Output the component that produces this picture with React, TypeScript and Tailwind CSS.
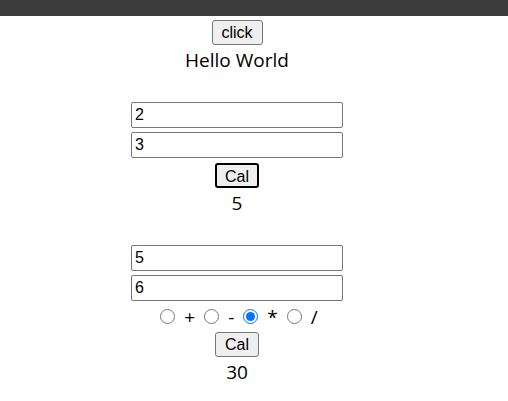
import { useState } from "react";

const sans = "font-['Open_Sans',sans-serif]";
const arial = "font-['Liberation_Sans',Arial,sans-serif]";

function Field({ value, onChange }: { value: string; onChange: (v: string) => void }) {
  return (
    <input
      type="text"
      value={value}
      onChange={(e) => onChange(e.target.value)}
      className={`${arial} w-[212px] h-[26px] px-[3px] text-[16px] text-black border border-[#767676] rounded-[2px] bg-white outline-none`}
    />
  );
}

function CalButton({ focused, onClick }: { focused?: boolean; onClick: () => void }) {
  return (
    <button
      onClick={onClick}
      className={`${arial} w-[44px] h-[25px] text-[16px] text-black bg-[#efefef] rounded-[3px] ${
        focused ? "border-2 border-black" : "border border-[#767676]"
      }`}
    >
      Cal
    </button>
  );
}

const ops = ["+", "-", "*", "/"];

export default function App() {
  const [msg, setMsg] = useState("Hello World");
  const [a, setA] = useState("2");
  const [b, setB] = useState("3");
  const [sum, setSum] = useState("5");
  const [c, setC] = useState("5");
  const [d, setD] = useState("6");
  const [op, setOp] = useState("*");
  const [res, setRes] = useState("30");

  const calc = () => {
    const x = Number(c);
    const y = Number(d);
    if (op === "+") setRes(String(x + y));
    if (op === "-") setRes(String(x - y));
    if (op === "*") setRes(String(x * y));
    if (op === "/") setRes(String(x / y));
  };

  return (
    <div className="w-[508px] h-[401px] bg-white overflow-hidden">
      <div className="h-[16px] bg-[#3c3c3c]" />

      <div className="w-[474px] flex flex-col items-center">
        {/* click */}
        <button
          onClick={() => setMsg(msg === "Hello World" ? "Hi" : "Hello World")}
          className={`${arial} mt-[4px] w-[51px] h-[25px] text-[16px] text-black bg-[#efefef] border border-[#767676] rounded-[3px]`}
        >
          click
        </button>
        <div className={`${sans} h-[30px] leading-[30px] text-[19px] text-black`}>{msg}</div>

        {/* sum */}
        <div className="mt-[27px] flex flex-col items-center gap-[4px]">
          <Field value={a} onChange={setA} />
          <Field value={b} onChange={setB} />
        </div>
        <div className="mt-[5px]">
          <CalButton focused onClick={() => setSum(String(Number(a) + Number(b)))} />
        </div>
        <div className={`${sans} h-[30px] leading-[30px] text-[19px] text-black`}>{sum}</div>

        {/* operator calc */}
        <div className="mt-[27px] flex flex-col items-center gap-[4px]">
          <Field value={c} onChange={setC} />
          <Field value={d} onChange={setD} />
        </div>
        <div className={`${sans} h-[31px] pl-[4px] flex items-center gap-[9px] text-[19px] text-black`}>
          {ops.map((o) => (
            <label key={o} className="flex items-center gap-[9px]">
              <input
                type="radio"
                name="op"
                checked={op === o}
                onChange={() => setOp(o)}
                className="w-[15px] h-[15px] -mt-[1px] accent-[#0075ff]"
              />
              <span className="leading-none pt-[2px]">{o}</span>
            </label>
          ))}
        </div>
        <CalButton onClick={calc} />
        <div className={`${sans} h-[30px] leading-[30px] text-[19px] text-black`}>{res}</div>
      </div>
    </div>
  );
}
